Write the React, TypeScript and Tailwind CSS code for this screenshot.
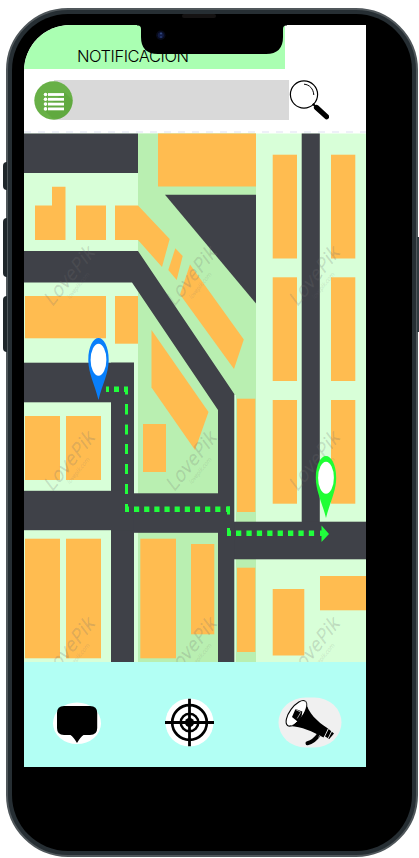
import React from 'react';

type Box = [x: number, y: number, right: number, bottom: number];

const ROADS = '#3f4148';

const buildings: Box[] = [
  [158, 133.5, 256, 186.5],
  [76, 205.5, 106, 240],
  [25, 296, 106, 338.3],
  [115, 296, 138, 343.7],
  [25, 416, 60, 480],
  [66, 416, 101, 480],
  [143, 424, 166, 472],
  [25, 538.7, 60, 658.3],
  [66, 538.7, 101, 658.3],
  [140.3, 538.7, 176, 658.3],
  [191, 544, 214.3, 634.3],
  [237, 398.7, 255.3, 512],
  [237, 567.7, 255.3, 652],
  [272.7, 154.7, 297, 258.5],
  [331, 154.7, 355.3, 258.5],
  [272.7, 277.3, 297, 381],
  [331, 277.3, 355.3, 381],
  [272.7, 400, 297, 503.7],
  [331, 400, 355.3, 503.7],
  [272.7, 589, 304.3, 655.5],
  [320, 576, 366, 610.3],
];

const roads: Box[] = [
  [24, 133.5, 138, 173],
  [24, 362.7, 134, 402.3],
  [111, 362.7, 134, 662],
  [24, 490.8, 134, 530.2],
  [133.5, 493.3, 234, 532.8],
  [301.7, 133.5, 319.8, 530],
  [218, 521.7, 366, 559.3],
];

const dashes: Box[] = [
  [106, 386.5, 109, 392],
  [114, 386.5, 119, 392],
  [124, 386.5, 128, 392],
  [125, 390, 128, 394.5],
  [125, 404, 128, 414.5],
  [125, 424.5, 128, 434.5],
  [125, 444, 128, 454],
  [125, 464, 128, 474],
  [125, 484, 128, 494],
  [125, 504, 128, 512],
  [125, 506.5, 129, 512],
  [226, 506.5, 230, 512],
  [227, 506.5, 230, 514.5],
  [227, 528, 230, 536],
  [227, 530.5, 231, 536],
  ...Array.from({ length: 9 }, (_, i): Box => [134 + i * 10.15, 506.5, 139.2 + i * 10.15, 512]),
  ...Array.from({ length: 8 }, (_, i): Box => [236 + i * 10.4, 530.5, 241.3 + i * 10.4, 536]),
];

function Boxes({ items, fill }: { items: Box[]; fill: string }) {
  return (
    <g fill={fill}>
      {items.map(([x, y, r, b], i) => (
        <rect key={i} x={x} y={y} width={r - x} height={b - y} />
      ))}
    </g>
  );
}

function Pin({ x, y, color }: { x: number; y: number; color: string }) {
  return (
    <g transform={`translate(${x} ${y})`}>
      <path d="M0 0C5 0 10.2 8 10.2 22C10.2 35 4 46 0 62C-4 46 -10.2 35 -10.2 22C-10.2 8 -5 0 0 0Z" fill={color} />
      <ellipse cx="0" cy="21.8" rx="7.9" ry="16" fill="#fff" />
    </g>
  );
}

function Watermark({ x, y }: { x: number; y: number }) {
  return (
    <g transform={`translate(${x} ${y}) rotate(-51) skewX(-14)`} fill="none" stroke="#707070" fontFamily="'Open Sans', sans-serif">
      <text x="0" y="0" fontSize="18.5" fontWeight="300" textLength="68" strokeWidth="0.6" strokeOpacity="0.3">LovePik</text>
      <text x="19" y="9" fontSize="6" textLength="32" strokeWidth="0.3" strokeOpacity="0.18">lovepik.com</text>
    </g>
  );
}

function StreetMap() {
  return (
    <svg className="block h-[529px] w-full shrink-0" viewBox="24 133 342 529">
      <rect x="24" y="133.5" width="342" height="528.5" fill="#d8ffd8" />
      <rect x="138" y="133.5" width="118" height="528.5" fill="#b9efb1" />
      <rect x="134" y="362.7" width="4" height="299.3" fill="#d8ffd8" />
      <rect x="234" y="395" width="2" height="267" fill="#d8ffd8" />
      <Boxes items={buildings} fill="#ffbc50" />
      <g fill="#ffbc50">
        <path d="M35 205.5H52V186.8H65.5V240H35Z" />
        <path d="M115 205.5H138L169.7 239L162 267L138 240H115Z" />
        <path d="M175.3 248.3L182.7 256L176.7 280L168.3 270Z" />
        <path d="M190 264.5L243.8 339.5L234 369L180 294.5Z" />
        <path d="M151.5 330L208.5 412L195 450L151.5 387.5Z" />
      </g>
      <Boxes items={roads} fill={ROADS} />
      <path d="M24 251H138L234.3 394V662H218V410L132 282.5H24Z" fill={ROADS} />
      <path d="M165 194.7H256V303.5Z" fill={ROADS} />
      {[307, 492, 678].map((y) => [52, 174, 297].map((x) => <Watermark key={`${x}-${y}`} x={x} y={y} />))}
      <Boxes items={dashes} fill="#20ff3c" />
      <path d="M320 530.5H321.5V525.5L329 534L321.5 542V536H320Z" fill="#20ff3c" />
      <Pin x={98.5} y={338} color="#087ffb" />
      <Pin x={326} y={456} color="#1fff34" />
    </svg>
  );
}

function MenuIcon() {
  return (
    <svg className="size-[39px] shrink-0" viewBox="0 0 39 39">
      <circle cx="19.5" cy="19.5" r="19.2" fill="#68b047" />
      <path d="M10 29L30 11L38.5 19A19.2 19.2 0 0 1 25 37.8L18 37Z" fill="#58a238" opacity=".5" />
      <g fill="#fff">
        {[13.5, 18.3, 23.1, 27.9].map((y) => (
          <g key={y}>
            <circle cx="11.5" cy={y} r="1.8" />
            <rect x="14" y={y - 1.4} width="16" height="2.8" />
          </g>
        ))}
      </g>
    </svg>
  );
}

function SearchIcon() {
  return (
    <svg className="h-10 w-10 shrink-0" viewBox="289 80 40 40" fill="none" stroke="#000">
      <circle cx="304" cy="94.5" r="13.6" strokeWidth="1.2" />
      <path d="M304 84.2C309.5 84.5 313.4 88.8 313.8 95" strokeWidth="1" />
      <path d="M312.8 103.8L316 107" strokeWidth="2" />
      <path d="M316.5 107.5L326.5 116.7" strokeWidth="5.2" strokeLinecap="round" />
    </svg>
  );
}

function ChatIcon() {
  return (
    <svg className="h-[52px] w-[50px]" viewBox="52 696 50 52">
      <ellipse cx="77" cy="722.3" rx="24" ry="20.8" fill="#fff" />
      <path d="M64 705H90Q97.2 705 97.2 712V727Q97.2 734 90 734H83.5Q80.5 736 77 742Q73.5 736 70.5 734H64Q57 734 57 727V712Q57 705 64 705Z" />
    </svg>
  );
}

function TargetIcon() {
  return (
    <svg className="h-[52px] w-[52px]" viewBox="-26.5 -25.5 52 52" fill="none" stroke="#000">
      <circle r="24" fill="#fff" stroke="none" />
      <circle r="17.3" strokeWidth="2.7" />
      <circle r="8.8" strokeWidth="2.5" />
      <circle r="4.6" fill="#000" stroke="none" />
      <path d="M-24.5 0H24.5M0-23.7V23.7" strokeWidth="2.8" />
    </svg>
  );
}

function MegaphoneIcon() {
  return (
    <svg className="h-[52px] w-16" viewBox="278 695.5 64 52">
      <defs>
        <pattern id="checks" width="2" height="2" patternUnits="userSpaceOnUse">
          <rect width="2" height="2" fill="#f5f5f5" />
          <path d="M0 0H1V1H0ZM1 1H2V2H1Z" fill="#ebebeb" />
        </pattern>
      </defs>
      <rect x="278.5" y="696" width="63" height="50" rx="27" ry="25" fill="url(#checks)" />
      <path d="M306 701C308 711 317 720 328 727L323.5 736C312 730 302 725 290 724.5Z" />
      <ellipse cx="296.4" cy="711.8" rx="15" ry="6.6" transform="rotate(-54 296.4 711.8)" fill="#fff" stroke="#000" strokeWidth="1.1" />
      <path d="M305.8 700.5C308.3 706 302 718 292 724.3L297 724.5L309 712Z" />
      <path d="M305.6 700C307.6 706.5 301.5 717.5 291.5 724" fill="none" stroke="#fff" strokeWidth=".7" />
      <path d="M295.5 707.5L302.3 710L301.5 715.5L297.5 720L292 715.5Z" />
      <path d="M295.5 708L301 710.8M300.6 711.2L297.2 717" stroke="#fff" strokeWidth=".6" />
      <path d="M328 727L334 732L329.3 737.5L323.5 734Z" />
      <path d="M328.5 727L324.3 735.5M331.8 729.5L328.2 736.8" stroke="#eee" strokeWidth=".9" />
      <path d="M319 733C315.5 738 313 740.5 307.5 741.7" fill="none" stroke="#000" strokeWidth="4" strokeLinecap="round" />
      <path d="M320 733.5L318.5 736" stroke="#eee" strokeWidth=".6" />
    </svg>
  );
}

function Notch() {
  return (
    <div className="absolute left-[113px] top-[-1px] z-10">
      <svg className="block h-[31px] w-[150px]" viewBox="137 24 150 31">
        <path d="M137 24H287V25.5H286Q283 25.5 283 29V37Q283 54 266 54H158Q141 54 141 37V29Q141 25.5 138 25.5H137Z" />
        <circle cx="160.8" cy="35.2" r="4.7" fill="#080b1b" />
        <circle cx="160.8" cy="35.2" r="3" fill="#111b43" />
        <circle cx="161" cy="33.5" r="1" fill="#344a82" />
        <circle cx="161" cy="37" r=".9" fill="#283c75" />
      </svg>
    </div>
  );
}

export default function App() {
  return (
    <div className="relative h-[858px] w-[419px] overflow-hidden bg-white pl-[6px] pt-2">
      <div className="absolute left-[3px] top-[162px] h-7 w-1 rounded-l-sm bg-[#20272b]" />
      <div className="absolute left-[3px] top-[218px] h-[59px] w-1 rounded-l-sm bg-[#20272b]" />
      <div className="absolute left-[3px] top-[296px] h-[56px] w-1 rounded-l-sm bg-[#20272b]" />
      <div className="absolute left-[417px] top-[237px] h-[95px] w-[2px] bg-[#303a40]" />
      <div className="h-[849px] w-[412px] rounded-[62px] border-2 border-[#50575b] bg-[#262e33] p-[4px]">
        <div className="h-full w-full rounded-[56px] bg-black pl-3 pt-[11px]">
          <div className="relative flex h-[742px] w-[342px] flex-col">
            <Notch />
            <div className="absolute left-[158px] top-[-11px] h-1 w-[34px] rounded-full bg-[#151313]" />
            <div className="flex h-full w-full flex-col overflow-hidden rounded-tl-[46px] bg-white">
              <header className="h-11 w-[261px] shrink-0 bg-[#aaffb2] pl-[53px] pt-[19px] font-['Inter'] text-[16.5px] font-light leading-6 tracking-[-0.46px]">
                <span className="block w-[112px] whitespace-nowrap text-black">NOTIFICACION</span>
              </header>
              <div className="flex h-[62px] shrink-0 items-start pl-[10px] pt-[11px]">
                <div className="flex h-10 w-[255px] items-center bg-[linear-gradient(to_right,transparent_20px,#d9d9d9_20px)]">
                  <MenuIcon />
                </div>
                <SearchIcon />
              </div>
              <div className="h-[2px] shrink-0 bg-[repeating-linear-gradient(to_right,#eef0f8_0_7px,#fff_7px_14px)]" />
              <StreetMap />
              <nav className="flex h-[105px] shrink-0 items-center bg-[#b2fff4] pl-7 pb-px pt-[17px]">
                <div className="flex w-full items-center">
                  <ChatIcon />
                  <div className="ml-[61px]"><TargetIcon /></div>
                  <div className="ml-[63px]"><MegaphoneIcon /></div>
                </div>
              </nav>
            </div>
          </div>
        </div>
      </div>
    </div>
  );
}
